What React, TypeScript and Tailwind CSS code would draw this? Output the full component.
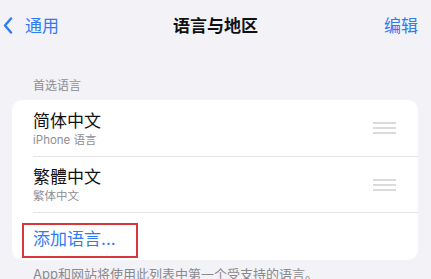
import React from "react";

const font = "font-['Inter','Noto_Sans_CJK_SC',sans-serif]";

function Handle() {
  return (
    <svg width="23" height="12" viewBox="0 0 23 12" className="shrink-0">
      <line x1="0" y1="1" x2="23" y2="1" stroke="#c8c8cc" strokeWidth="1.3" />
      <line x1="0" y1="6" x2="23" y2="6" stroke="#c8c8cc" strokeWidth="1.3" />
      <line x1="0" y1="11" x2="23" y2="11" stroke="#c8c8cc" strokeWidth="1.3" />
    </svg>
  );
}

function LangRow({ title, sub, h }: { title: string; sub: string; h: string }) {
  return (
    <div className={`flex items-center pl-[21px] ${h}`}>
      <div className="flex flex-1 items-center border-b border-[#e3e3e8] h-full pr-[22px]">
        <div className="flex flex-1 flex-col pt-[1px]">
          <div className="text-[17px] leading-[20px] text-[#111111]">{title}</div>
          <div className="mt-[2px] text-[11.5px] leading-[14px] text-[#8e8e93]">{sub}</div>
        </div>
        <Handle />
      </div>
    </div>
  );
}

export default function App() {
  return (
    <div className={`w-[431px] h-[279px] overflow-hidden bg-[#f2f2f7] ${font}`}>
      <div className="grid grid-cols-[1fr_auto_1fr] items-center h-[51px]">
        <div className="flex items-center pl-[3px]">
          <svg width="10" height="17" viewBox="0 0 10 17" className="shrink-0">
            <polyline
              points="8,1.5 2,8.5 8,15.5"
              fill="none"
              stroke="#2f7bf5"
              strokeWidth="2.4"
              strokeLinecap="round"
              strokeLinejoin="round"
            />
          </svg>
          <span className="ml-[12px] text-[17px] leading-[20px] text-[#2f7bf5]">通用</span>
        </div>
        <div className="text-[17px] leading-[20px] font-semibold text-[#111111]">语言与地区</div>
        <div className="flex justify-end pr-[13px]">
          <span className="text-[17px] leading-[20px] text-[#2f7bf5]">编辑</span>
        </div>
      </div>
      <div className="flex items-end h-[49px] pl-[33px] pb-[6px]">
        <span className="text-[12px] leading-[16px] text-[#8e8e93]">首选语言</span>
      </div>
      <div className="mx-[12px] w-[406px] rounded-[10px] bg-white">
        <LangRow title="简体中文" sub="iPhone 语言" h="h-[57px]" />
        <LangRow title="繁體中文" sub="繁体中文" h="h-[56px]" />
        <div className="relative flex items-center h-[47px] pl-[21px] pt-[4px]">
          <span className="text-[17px] leading-[20px] text-[#2f7bf5]">添加语言...</span>
          <div className="absolute left-[10px] top-[10px] w-[116px] h-[35px] border-2 border-[#d8363a]" />
        </div>
      </div>
      <div className="pl-[33px] pt-[6px] text-[13px] leading-[16px] text-[#8a8a8e] whitespace-nowrap">
        App和网站将使用此列表中第一个受支持的语言。
      </div>
    </div>
  );
}
